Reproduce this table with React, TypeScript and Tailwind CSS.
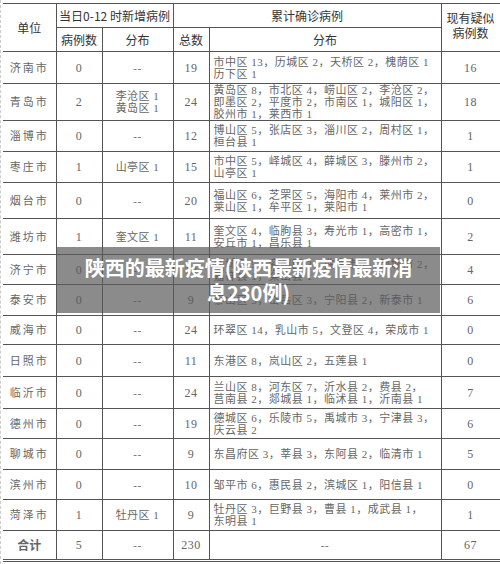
import React from 'react';

type Row = {
  city: string;
  add: string;
  addDist: string[];
  total: string;
  dist: string[];
  suspect: string;
  h: string;
};

const ROWS: Row[] = [
  { city: '济南市', add: '0', addDist: ['--'], total: '19', dist: ['市中区 13，历城区 2，天桥区 2，槐荫区 1', '历下区 1'], suspect: '16', h: 'h-[32px]' },
  { city: '青岛市', add: '2', addDist: ['李沧区 1', '黄岛区 1'], total: '24', dist: ['黄岛区 8，市北区 4，崂山区 2，李沧区 2，', '即墨区 2，平度市 2，市南区 1，城阳区 1，', '胶州市 1，莱西市 1'], suspect: '18', h: 'h-[37px]' },
  { city: '淄博市', add: '0', addDist: ['--'], total: '12', dist: ['博山区 5，张店区 3，淄川区 2，周村区 1，', '桓台县 1'], suspect: '1', h: 'h-[31px]' },
  { city: '枣庄市', add: '1', addDist: ['山亭区 1'], total: '15', dist: ['市中区 5，峄城区 4，薛城区 3，滕州市 2，', '山亭区 1'], suspect: '1', h: 'h-[31px]' },
  { city: '烟台市', add: '0', addDist: ['--'], total: '20', dist: ['福山区 6，芝罘区 5，海阳市 4，莱州市 2，', '莱山区 1，牟平区 1，莱阳市 1'], suspect: '0', h: 'h-[36px]' },
  { city: '潍坊市', add: '1', addDist: ['奎文区 1'], total: '11', dist: ['奎文区 4，临朐县 3，寿光市 1，高密市 1，', '安丘市 1，昌乐县 1'], suspect: '2', h: 'h-[36px]' },
  { city: '济宁市', add: '0', addDist: ['--'], total: '14', dist: ['任城区 5，兖州区 3，曲阜市 2，邹城市 2，', '嘉祥县 1，梁山县 1'], suspect: '4', h: 'h-[30px]' },
  { city: '泰安市', add: '0', addDist: ['--'], total: '9', dist: ['泰山区 3，岱岳区 3，宁阳县 2，新泰市 1'], suspect: '6', h: 'h-[31px]' },
  { city: '威海市', add: '0', addDist: ['--'], total: '24', dist: ['环翠区 14，乳山市 5，文登区 4，荣成市 1'], suspect: '0', h: 'h-[29px]' },
  { city: '日照市', add: '0', addDist: ['--'], total: '11', dist: ['东港区 8，岚山区 2，五莲县 1'], suspect: '0', h: 'h-[32px]' },
  { city: '临沂市', add: '0', addDist: ['--'], total: '24', dist: ['兰山区 8，河东区 7，沂水县 2，费县 2，', '莒南县 2，郯城县 1，临沭县 1，沂南县 1'], suspect: '7', h: 'h-[32px]' },
  { city: '德州市', add: '0', addDist: ['--'], total: '19', dist: ['德城区 6，乐陵市 5，禹城市 3，宁津县 3，', '庆云县 2'], suspect: '6', h: 'h-[30px]' },
  { city: '聊城市', add: '0', addDist: ['--'], total: '9', dist: ['东昌府区 3，莘县 3，东阿县 2，临清市 1'], suspect: '5', h: 'h-[31px]' },
  { city: '滨州市', add: '0', addDist: ['--'], total: '10', dist: ['邹平市 6，惠民县 2，滨城区 1，阳信县 1'], suspect: '0', h: 'h-[30px]' },
  { city: '菏泽市', add: '1', addDist: ['牡丹区 1'], total: '9', dist: ['牡丹区 3，巨野县 3，曹县 1，成武县 1，', '东明县 1'], suspect: '1', h: 'h-[31px]' },
];

const cell = 'border border-[#555] p-0 align-middle';
const head = `${cell} text-center text-[12px] text-[#333] font-['Noto_Sans_CJK_SC',sans-serif]`;
const body = `${cell} text-center text-[11px] leading-[12px] tracking-[0.5px] text-[#666]`;

export default function App() {
  return (
    <div className="relative w-[500px] h-[564px] bg-white overflow-hidden font-['Liberation_Serif','Noto_Sans_CJK_SC',serif]">
      <div className="pt-[3px] pl-[2px] border-l border-dashed border-[#ccc] h-full">
        <table className="table-fixed border-collapse w-[497px] border-b-[3px] border-double border-b-[#555]">
          <colgroup>
            <col className="w-[53px]" />
            <col className="w-[46px]" />
            <col className="w-[71px]" />
            <col className="w-[36px]" />
            <col className="w-[232px]" />
            <col className="w-[59px]" />
          </colgroup>
          <thead>
            <tr className="h-[24px]">
              <th rowSpan={2} className={`${head} border-l-0 font-normal`}>单位</th>
              <th colSpan={2} className={`${head} font-normal`}>当日0-12 时新增病例</th>
              <th colSpan={2} className={`${head} font-normal`}>累计确诊病例</th>
              <th rowSpan={2} className={`${head} font-normal leading-[15px] pb-[6px]`}>
                现有疑似
                <br />
                病例数
              </th>
            </tr>
            <tr className="h-[24px]">
              <th className={`${head} font-normal`}>病例数</th>
              <th className={`${head} font-normal`}>分布</th>
              <th className={`${head} font-normal`}>总数</th>
              <th className={`${head} font-normal`}>分布</th>
            </tr>
          </thead>
          <tbody>
            {ROWS.map((r) => (
              <tr key={r.city} className={r.h}>
                <td className={`${body} border-l-0 tracking-[2px]`}>{r.city}</td>
                <td className={`${body} text-[12px] text-[#555]`}>{r.add}</td>
                <td className={body}>
                  {r.addDist.map((d) => (
                    <div key={d}>{d}</div>
                  ))}
                </td>
                <td className={`${body} text-[12px] text-[#555]`}>{r.total}</td>
                <td className={`${body} text-left pl-[4px] whitespace-nowrap`}>
                  {r.dist.map((d) => (
                    <div key={d}>{d}</div>
                  ))}
                </td>
                <td className={`${body} text-[12px] text-[#555]`}>{r.suspect}</td>
              </tr>
            ))}
            <tr className="h-[30px]">
              <td className={`${body} border-l-0 text-[12px] font-bold text-[#333] tracking-normal font-['Noto_Sans_CJK_SC',sans-serif]`}>合计</td>
              <td className={`${body} text-[12px] text-[#555]`}>5</td>
              <td className={body}>--</td>
              <td className={`${body} text-[12px] text-[#555]`}>230</td>
              <td className={body}>--</td>
              <td className={`${body} text-[12px] text-[#555]`}>67</td>
            </tr>
          </tbody>
        </table>
      </div>

      <div className="absolute left-[57px] top-[247px] w-[383px] h-[66px] bg-[rgba(90,90,90,0.7)] flex items-center justify-center">
        <p className="text-center text-white font-bold text-[20px] leading-[25px] font-['Noto_Sans_CJK_SC',sans-serif] whitespace-nowrap">
          陕西的最新疫情(陕西最新疫情最新消
          <br />
          息230例)
        </p>
      </div>
    </div>
  );
}
